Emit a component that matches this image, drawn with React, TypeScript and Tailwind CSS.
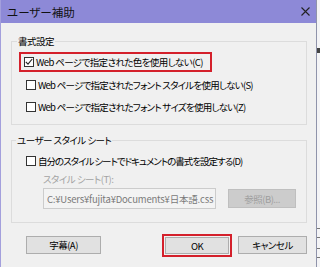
import React from "react";

function Box({ checked = false }: { checked?: boolean }) {
  return (
    <span className="w-[10px] h-[10px] shrink-0 border border-[#333333] bg-white flex items-center justify-center">
      {checked && (
        <svg width="8" height="8" viewBox="0 0 8 8">
          <path d="M0.8 3.8 L3 6.2 L7.2 1" fill="none" stroke="#222" strokeWidth="1.1" />
        </svg>
      )}
    </span>
  );
}

export default function App() {
  return (
    <div className="w-[320px] h-[267px] flex bg-[#f0f0f0] overflow-hidden text-black font-['Noto_Sans_CJK_JP',sans-serif] [font-feature-settings:'palt'] text-[9.5px] tracking-[-0.5px] leading-[12px]">
      <div className="w-[316px] h-full flex flex-col border-l border-[#a39fdc]">
        <div className="h-[23px] shrink-0 bg-[#8d89d7] flex items-center justify-between pl-[6px] pr-[6px]">
          <span className="text-[11.5px] tracking-normal leading-[14px] text-[#111]">ユーザー補助</span>
          <svg width="9" height="9" viewBox="0 0 9 9">
            <path d="M0.5 0.5 L8.5 8.5 M8.5 0.5 L0.5 8.5" stroke="#222" strokeWidth="1.1" />
          </svg>
        </div>
        <div className="flex-1 flex flex-col pl-[10px] pr-[9px] pt-[12px]">
          <fieldset className="m-0 p-0 border border-[#dcdcdc] pb-[6px]">
            <legend className="ml-[5px] px-[1px] leading-[12px]">書式設定</legend>
            <div className="mt-[5px] ml-[7px] w-[193px] h-[20px] border-2 border-[#d4202b] flex items-center gap-[2px] pl-[3px]">
              <Box checked />
              <span className="whitespace-nowrap tracking-[-0.6px]">Web ページで指定された色を使用しない(C)</span>
            </div>
            <div className="h-[22px] mt-[2px] flex items-center gap-[2px] pl-[14px]">
              <Box />
              <span className="whitespace-nowrap tracking-[-0.75px]">Web ページで指定されたフォント スタイルを使用しない(S)</span>
            </div>
            <div className="h-[22px] flex items-center gap-[2px] pl-[14px]">
              <Box />
              <span className="whitespace-nowrap tracking-[-0.75px]">Web ページで指定されたフォント サイズを使用しない(Z)</span>
            </div>
          </fieldset>
          <fieldset className="m-0 p-0 mt-[9px] border border-[#dcdcdc] pb-[13px]">
            <legend className="ml-[4px] px-[1px] leading-[12px]">ユーザー スタイル シート</legend>
            <div className="h-[22px] mt-[4px] flex items-center gap-[2px] pl-[14px]">
              <Box />
              <span className="whitespace-nowrap tracking-[-1px]">自分のスタイル シートでドキュメントの書式を設定する(D)</span>
            </div>
            <div className="h-[14px] flex items-center pl-[31px] text-[#a3a3a3]">スタイル シート(T):</div>
            <div className="mt-[2px] flex items-center pl-[31px]">
              <div className="w-[173px] h-[21px] border border-[#cccccc] bg-[#f3f3f3] flex items-center pl-[3px] text-[#7a7a7a] tracking-[-0.2px] whitespace-nowrap overflow-hidden">
                C:¥Users¥fujita¥Documents¥日本語.css
              </div>
              <div className="ml-[12px] w-[68px] h-[19px] border border-[#bfbfbf] bg-[#cccccc] flex items-center justify-center text-[#9e9e9e]">
                参照(B)...
              </div>
            </div>
          </fieldset>
          <div className="mt-[11px] flex items-start">
            <div className="ml-[15px] mt-[2px] w-[75px] h-[18px] border border-[#adadad] bg-[#e1e1e1] flex items-center justify-center">
              字幕(A)
            </div>
            <div className="ml-[61px] w-[70px] h-[23px] border-2 border-[#d4202b] p-[1px] flex">
              <div className="flex-1 border border-[#adadad] bg-[#e1e1e1] flex items-center justify-center">OK</div>
            </div>
            <div className="ml-[6px] mt-[2px] w-[69px] h-[18px] border border-[#adadad] bg-[#e1e1e1] flex items-center justify-center">
              キャンセル
            </div>
          </div>
        </div>
      </div>
      <div className="w-[4px] h-full border-l border-[#8f93aa] bg-[#f4f4f6] flex flex-col">
        <div className="mt-[48px] w-[3px] h-[5px] bg-[#444]" />
        <div className="mt-[175px] w-[3px] h-[1px] bg-[#777]" />
        <div className="mt-[8px] w-[3px] h-[1px] bg-[#777]" />
        <div className="mt-[10px] w-[3px] h-[1px] bg-[#777]" />
        <div className="mt-[8px] w-[3px] h-[1px] bg-[#777]" />
      </div>
    </div>
  );
}
